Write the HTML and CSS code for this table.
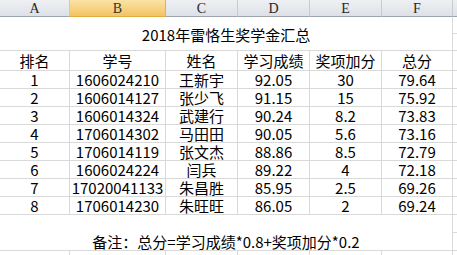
FILE: index.html
```html
<!DOCTYPE html>
<html lang="zh-CN">
<head>
<meta charset="utf-8">
<title>2018年雷恪生奖学金汇总</title>
<link rel="stylesheet" href="styles.css">
</head>
<body>
<div class="sheet">
  <div class="colhead">
    <div class="ch">A</div>
    <div class="ch sel">B</div>
    <div class="ch">C</div>
    <div class="ch">D</div>
    <div class="ch">E</div>
    <div class="ch">F</div>
    <div class="ch last"></div>
  </div>
  <div class="grid">
    <div class="c title">2018年雷恪生奖学金汇总</div>
    <div class="c g"></div>
    <div class="c g"></div>

    <div class="c">排名</div><div class="c">学号</div><div class="c">姓名</div><div class="c">学习成绩</div><div class="c">奖项加分</div><div class="c">总分</div><div class="c g"></div>

    <div class="c">1</div><div class="c">1606024210</div><div class="c">王新宇</div><div class="c">92.05</div><div class="c">30</div><div class="c">79.64</div><div class="c g"></div>
    <div class="c">2</div><div class="c">1606014127</div><div class="c">张少飞</div><div class="c">91.15</div><div class="c">15</div><div class="c">75.92</div><div class="c g"></div>
    <div class="c">3</div><div class="c">1606014324</div><div class="c">武建行</div><div class="c">90.24</div><div class="c">8.2</div><div class="c">73.83</div><div class="c g"></div>
    <div class="c">4</div><div class="c">1706014302</div><div class="c">马田田</div><div class="c">90.05</div><div class="c">5.6</div><div class="c">73.16</div><div class="c g"></div>
    <div class="c">5</div><div class="c">1706014119</div><div class="c">张文杰</div><div class="c">88.86</div><div class="c">8.5</div><div class="c">72.79</div><div class="c g"></div>
    <div class="c">6</div><div class="c">1606024224</div><div class="c">闫兵</div><div class="c">89.22</div><div class="c">4</div><div class="c">72.18</div><div class="c g"></div>
    <div class="c">7</div><div class="c">17020041133</div><div class="c">朱昌胜</div><div class="c">85.95</div><div class="c">2.5</div><div class="c">69.26</div><div class="c g"></div>
    <div class="c">8</div><div class="c">1706014230</div><div class="c">朱旺旺</div><div class="c">86.05</div><div class="c">2</div><div class="c">69.24</div><div class="c g"></div>

    <div class="c note">备注：总分=学习成绩*0.8+奖项加分*0.2</div>
    <div class="c g"></div>
    <div class="c g"></div>

    <div class="c"></div><div class="c"></div><div class="c"></div><div class="c"></div><div class="c"></div><div class="c"></div><div class="c g"></div>
  </div>
</div>
</body>
</html>
```
FILE: styles.css
```css
html, body {
  margin: 0;
  padding: 0;
  background: #ffffff;
  overflow: hidden;
}

.sheet {
  width: 457px;
  height: 255px;
  overflow: hidden;
  font-family: "Noto Sans CJK SC", "Noto Sans", sans-serif;
  color: #000;
}

.colhead {
  display: grid;
  grid-template-columns: 70px 96px 72px 72px 72px 71px 4px;
  height: 17px;
}

.ch {
  box-sizing: border-box;
  border-right: 1px solid #c6cbd2;
  border-bottom: 1px solid #9ea4ad;
  background: linear-gradient(#eef0f3, #dde1e7);
  font-family: "Liberation Serif", "DejaVu Serif", serif;
  font-size: 14px;
  color: #262626;
  display: flex;
  align-items: center;
  justify-content: center;
  line-height: 1;
  padding-top: 1px;
}

.ch.sel {
  background: linear-gradient(#fbe3a6, #f3c463);
  border-bottom-color: #e2a93c;
  border-right-color: #e2b25a;
  color: #333;
}

.ch.last {
  border-right: none;
}

.grid {
  display: grid;
  grid-template-columns: 70px 96px 72px 72px 72px 71px 4px;
  grid-template-rows: 17px 17px 20px repeat(8, 18px) 18px 18px 18px;
}

.c {
  box-sizing: border-box;
  border-right: 1px solid #d9d9d9;
  border-bottom: 1px solid #d9d9d9;
  display: flex;
  align-items: center;
  justify-content: center;
  font-size: 15px;
  line-height: 1;
  white-space: nowrap;
}

.c.g {
  border-right: none;
}

.title {
  grid-column: 1 / 7;
  grid-row: 1 / 3;
  padding-top: 2px;
}

.note {
  grid-column: 1 / 7;
  grid-row: 12 / 14;
  align-items: flex-end;
  padding-bottom: 1px;
}
```
